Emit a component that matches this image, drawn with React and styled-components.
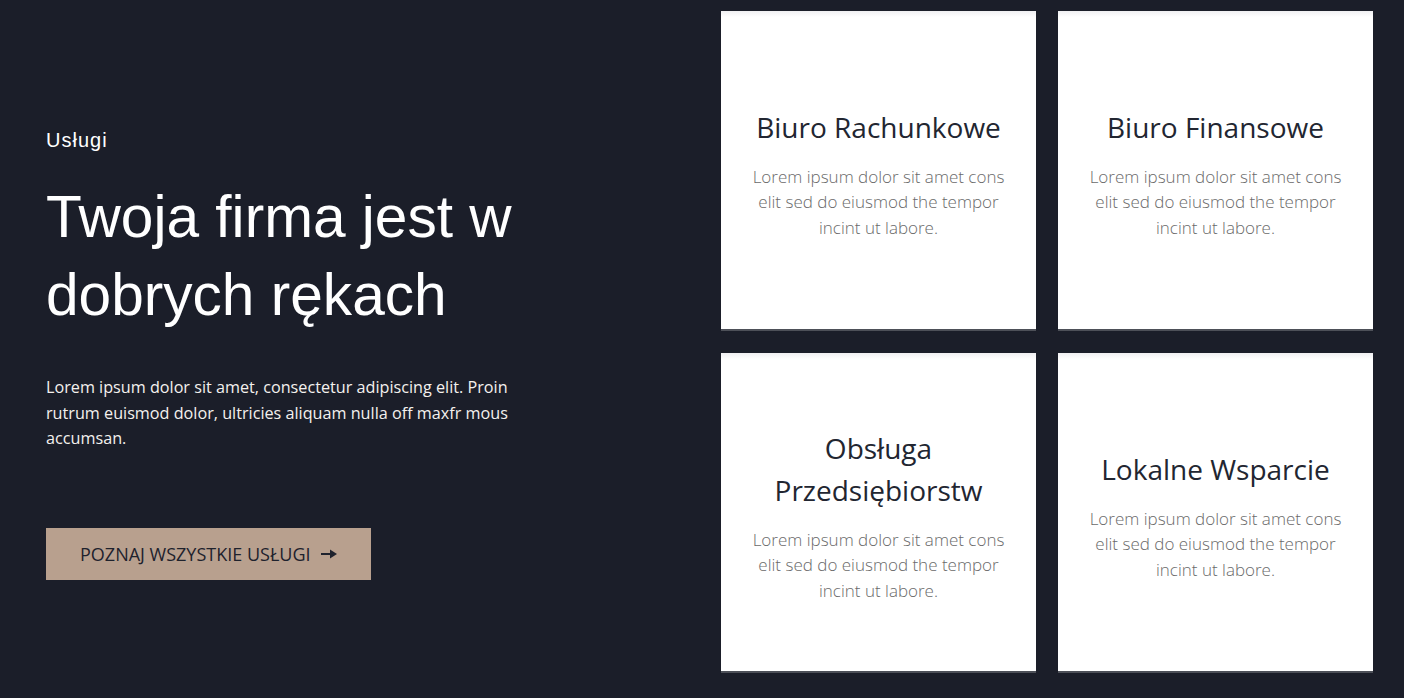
import React from 'react';
import styled, { createGlobalStyle } from 'styled-components';

const GlobalStyle = createGlobalStyle`
    html, body {
        margin: 0;
        padding: 0;
        background: #1b1e29;
    }
    * {
        box-sizing: border-box;
    }
`;

const Section = styled.section`
    display: grid;
    grid-template-columns: 675px 652px;
    height: 698px;
    padding: 11px 0 0 46px;
    background: #1b1e29;
`;

const Intro = styled.div`
    display: flex;
    flex-direction: column;
    padding-top: 116px;
`;

const Eyebrow = styled.h4`
    margin: 0;
    font-family: 'Liberation Sans', Arial, sans-serif;
    font-size: 20px;
    font-weight: 500;
    letter-spacing: 1px;
    line-height: 26px;
    color: #ffffff;
`;

const Heading = styled.h2`
    margin: 25px 0 0;
    font-family: 'Liberation Sans', Arial, sans-serif;
    font-size: 58.6px;
    font-weight: 400;
    line-height: 78px;
    color: #ffffff;
    max-width: 520px;
`;

const Lead = styled.p`
    margin: 41px 0 0;
    max-width: 480px;
    font-family: 'Open Sans', sans-serif;
    font-size: 16.2px;
    line-height: 25.6px;
    color: #f4f1ee;
`;

const Button = styled.a`
    display: inline-flex;
    align-items: center;
    gap: 10px;
    align-self: flex-start;
    margin-top: 76px;
    height: 52px;
    padding: 0 34px;
    background: #b8a08e;
    font-family: 'Open Sans', sans-serif;
    font-size: 18px;
    text-transform: uppercase;
    color: #1e222d;
    text-decoration: none;
    cursor: pointer;
`;

const Grid = styled.div`
    display: grid;
    grid-template-columns: repeat(2, 315px);
    grid-auto-rows: 320px;
    column-gap: 22px;
    row-gap: 22px;
`;

const Card = styled.div`
    display: flex;
    flex-direction: column;
    align-items: center;
    justify-content: center;
    padding: 6px 26px 0;
    text-align: center;
    background: linear-gradient(#f0f0f2 0px, #ffffff 6px);
    border-bottom: 2px solid #4d5058;
`;

const CardTitle = styled.h3`
    margin: 0;
    font-family: 'Open Sans', sans-serif;
    font-size: 28px;
    font-weight: 400;
    line-height: 42px;
    color: #222631;
`;

const CardText = styled.p`
    margin: 16px 0 0;
    font-family: 'Open Sans', sans-serif;
    font-size: 17px;
    font-weight: 300;
    line-height: 25.5px;
    color: #6a6a6a;
`;

const Arrow = () => (
    <svg width="16" height="10" viewBox="0 0 16 10">
        <rect x="0" y="4" width="10" height="2" fill="#1e222d" />
        <path d="M9 0.5 L16 5 L9 9.5 Z" fill="#1e222d" />
    </svg>
);

const services = [
    { title: 'Biuro Rachunkowe' },
    { title: 'Biuro Finansowe' },
    { title: 'Obsługa Przedsiębiorstw' },
    { title: 'Lokalne Wsparcie' }
];

const App = () => (
    <>
        <GlobalStyle />
        <Section>
            <Intro>
                <Eyebrow>Usługi</Eyebrow>
                <Heading>Twoja firma jest w dobrych rękach</Heading>
                <Lead>
                    Lorem ipsum dolor sit amet, consectetur adipiscing elit.
                    Proin rutrum euismod dolor, ultricies aliquam nulla off
                    maxfr mous accumsan.
                </Lead>
                <Button>
                    Poznaj wszystkie usługi
                    <Arrow />
                </Button>
            </Intro>
            <Grid>
                {services.map(s => (
                    <Card key={s.title}>
                        <CardTitle>{s.title}</CardTitle>
                        <CardText>
                            Lorem ipsum dolor sit amet cons elit sed do
                            eiusmod the tempor incint ut labore.
                        </CardText>
                    </Card>
                ))}
            </Grid>
        </Section>
    </>
);

export default App;
